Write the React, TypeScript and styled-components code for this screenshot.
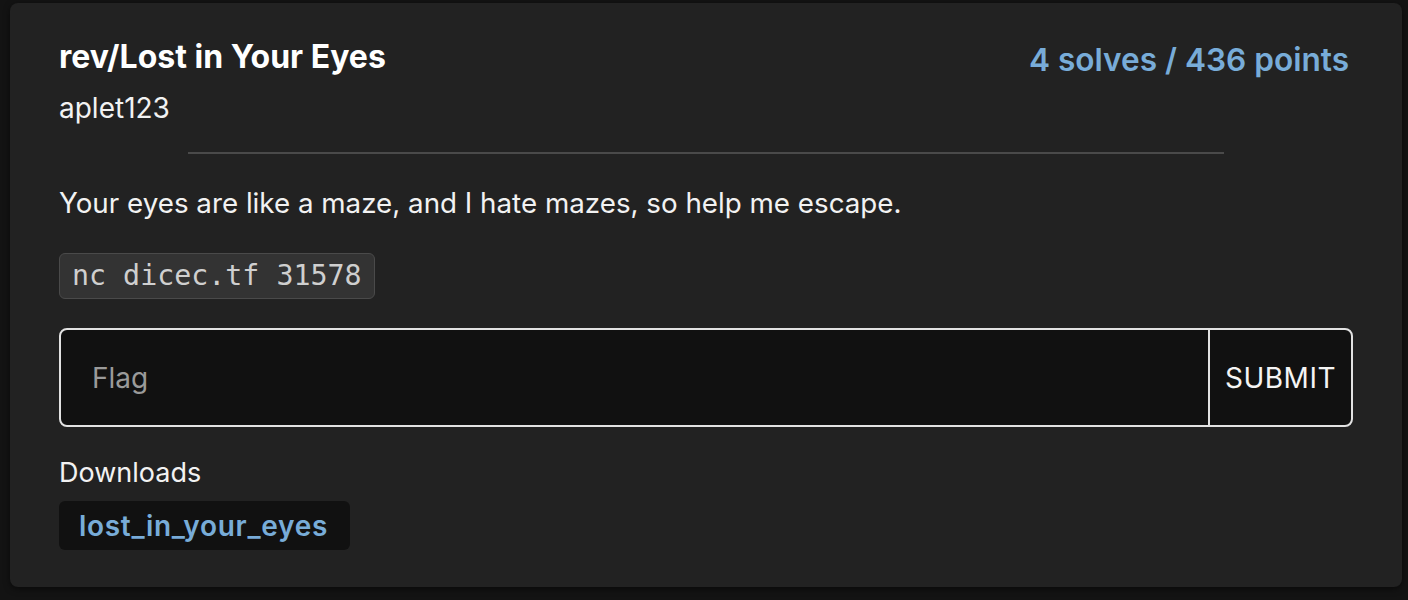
import React from "react";
import styled, { createGlobalStyle } from "styled-components";

const Global = createGlobalStyle`
  html, body { margin: 0; padding: 0; background: #131313; }
  body { font-family: Inter, "Noto Sans", sans-serif; color: #f2f2f2; }
`;

const Page = styled.div`
  padding: 3px 6px 14px 10px;
`;

const Card = styled.div`
  background: #222222;
  border-radius: 8px;
  box-shadow: 0 2px 6px rgba(0, 0, 0, 0.5);
  padding: 34px 49px 37px 49px;
  display: flex;
  flex-direction: column;
`;

const Header = styled.div`
  display: flex;
  justify-content: space-between;
  align-items: flex-start;
`;

const TitleBlock = styled.div`
  display: flex;
  flex-direction: column;
  gap: 15px;
`;

const Title = styled.div`
  font-size: 32px;
  font-weight: 700;
  line-height: 40px;
  color: #ffffff;
`;

const Author = styled.div`
  font-size: 28px;
  line-height: 32px;
  color: #f2f2f2;
`;

const Points = styled.div`
  font-size: 31.6px;
  font-weight: 600;
  line-height: 40px;
  margin-top: 3px;
  margin-right: 4px;
  color: #78acd8;
`;

const Divider = styled.hr`
  width: 80%;
  border: none;
  border-top: 2px solid #4a4a4a;
  margin: 28px auto 29px;
`;

const Description = styled.p`
  font-size: 27.75px;
  line-height: 40px;
  margin: 0 0 30px;
`;

const Code = styled.code`
  align-self: flex-start;
  font-family: "DejaVu Sans Mono", monospace;
  font-size: 28.3px;
  color: #cfcfcf;
  background: #333333;
  border: 1px solid #4a4a4a;
  border-radius: 6px;
  padding: 4px 12px;
  line-height: 36px;
`;

const FlagForm = styled.form`
  display: flex;
  margin-top: 29px;
  height: 99px;
  border: 2px solid #e2e2e2;
  border-radius: 8px;
  background: #111111;
  box-sizing: border-box;
  overflow: hidden;
`;

const FlagInput = styled.input`
  flex: 1;
  min-width: 0;
  background: transparent;
  border: none;
  outline: none;
  padding: 0 31px;
  font-family: Inter, "Noto Sans", sans-serif;
  font-size: 28px;
  color: #eee;
  &::placeholder { color: #9a9a9a; }
`;

const SubmitButton = styled.button`
  width: 143px;
  background: transparent;
  border: none;
  border-left: 2px solid #e2e2e2;
  color: #f4f4f4;
  font-family: Inter, "Noto Sans", sans-serif;
  font-size: 28px;
  letter-spacing: 0.5px;
  padding: 0;
  cursor: pointer;
`;

const DownloadsLabel = styled.div`
  font-size: 27px;
  line-height: 40px;
  margin-top: 26px;
`;

const DownloadLink = styled.a`
  align-self: flex-start;
  margin-top: 8px;
  background: #111111;
  border-radius: 6px;
  padding: 8px 22px 6px 20px;
  font-size: 28px;
  font-weight: 600;
  line-height: 35px;
  letter-spacing: 0.7px;
  color: #78acd8;
  text-decoration: none;
`;

export default function App() {
  return (
    <>
      <Global />
      <Page>
        <Card>
          <Header>
            <TitleBlock>
              <Title>rev/Lost in Your Eyes</Title>
              <Author>aplet123</Author>
            </TitleBlock>
            <Points>4 solves / 436 points</Points>
          </Header>
          <Divider />
          <Description>Your eyes are like a maze, and I hate mazes, so help me escape.</Description>
          <Code>nc dicec.tf 31578</Code>
          <FlagForm onSubmit={(e) => e.preventDefault()}>
            <FlagInput placeholder="Flag" />
            <SubmitButton type="submit">SUBMIT</SubmitButton>
          </FlagForm>
          <DownloadsLabel>Downloads</DownloadsLabel>
          <DownloadLink href="#">lost_in_your_eyes</DownloadLink>
        </Card>
      </Page>
    </>
  );
}
